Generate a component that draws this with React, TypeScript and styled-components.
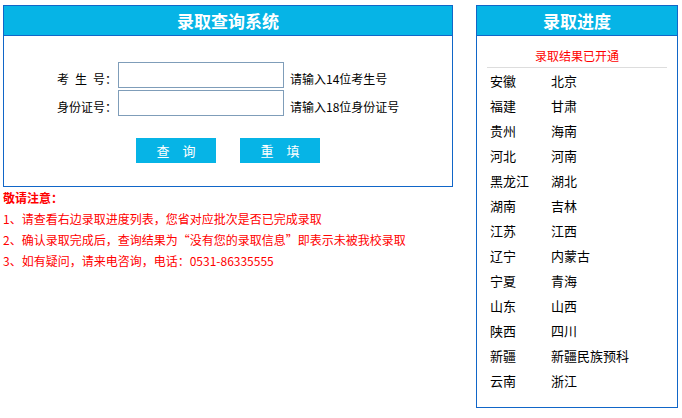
import styled, { createGlobalStyle } from "styled-components";

const GlobalStyle = createGlobalStyle`
  body {
    margin: 0;
    background: #fff;
    font-family: "Noto Sans CJK SC", "Liberation Sans", sans-serif;
    font-size: 12px;
    color: #000;
  }
`;

const Page = styled.div`
  display: flex;
  align-items: flex-start;
  gap: 23px;
  padding: 5px 0 0 3px;
`;

const LeftColumn = styled.div`
  width: 450px;
`;

const Panel = styled.div<{ $width: number }>`
  box-sizing: border-box;
  width: ${(p) => p.$width}px;
  border: 1px solid #1166c8;
  background: #fff;
`;

const PanelHeader = styled.div`
  height: 29px;
  line-height: 29px;
  background: #06b4e6;
  border-bottom: 1px solid #1166c8;
  color: #fff;
  font-size: 17px;
  font-weight: bold;
  text-align: center;
`;

const FormBody = styled.div`
  display: flex;
  flex-direction: column;
  padding: 26px 0 23px;
`;

const FieldRow = styled.div`
  display: flex;
  align-items: flex-end;
  margin-bottom: 2px;
`;

const Label = styled.label`
  width: 113px;
  padding-right: 1px;
  text-align: right;
  line-height: 18px;
`;

const Input = styled.input`
  box-sizing: border-box;
  width: 166px;
  height: 26px;
  margin: 0;
  padding: 2px 4px;
  border: 1px solid #7f9db9;
  font: inherit;
  outline: none;
`;

const Hint = styled.span`
  margin-left: 6px;
  line-height: 18px;
`;

const ButtonRow = styled.div`
  display: flex;
  justify-content: center;
  gap: 24px;
  margin-top: 20px;
`;

const Button = styled.button`
  width: 80px;
  height: 25px;
  margin: 0;
  padding: 0;
  border: none;
  background: #06b4e6;
  color: #fff;
  font-family: inherit;
  font-size: 13px;
  cursor: pointer;
`;

const Notice = styled.div`
  color: #ff0000;
  line-height: 21px;
`;

const NoticeTitle = styled.div`
  font-weight: bold;
`;

const NoticeLine = styled.div``;

const Subtitle = styled.div`
  margin: 10px 10px 0;
  line-height: 20px;
  padding-bottom: 1px;
  border-bottom: 1px solid #dddddd;
  color: #ff0000;
  text-align: center;
`;

const ProvinceList = styled.div`
  padding: 0 0 14px 13px;
`;

const ProvinceRow = styled.div`
  display: flex;
  height: 25px;
  align-items: center;
  font-size: 13px;
`;

const ProvinceCell = styled.span<{ $width?: number }>`
  width: ${(p) => (p.$width ? `${p.$width}px` : "auto")};
`;

const provinces: [string, string][] = [
  ["安徽", "北京"],
  ["福建", "甘肃"],
  ["贵州", "海南"],
  ["河北", "河南"],
  ["黑龙江", "湖北"],
  ["湖南", "吉林"],
  ["江苏", "江西"],
  ["辽宁", "内蒙古"],
  ["宁夏", "青海"],
  ["山东", "山西"],
  ["陕西", "四川"],
  ["新疆", "新疆民族预科"],
  ["云南", "浙江"],
];

export default function App() {
  return (
    <>
      <GlobalStyle />
      <Page>
        <LeftColumn>
          <Panel $width={450}>
            <PanelHeader>录取查询系统</PanelHeader>
            <FormBody>
              <FieldRow>
                <Label>考&ensp;生&ensp;号：</Label>
                <Input type="text" />
                <Hint>请输入14位考生号</Hint>
              </FieldRow>
              <FieldRow>
                <Label>身份证号：</Label>
                <Input type="text" />
                <Hint>请输入18位身份证号</Hint>
              </FieldRow>
              <ButtonRow>
                <Button>查{"\u3000"}询</Button>
                <Button>重{"\u3000"}填</Button>
              </ButtonRow>
            </FormBody>
          </Panel>
          <Notice>
            <NoticeTitle>敬请注意：</NoticeTitle>
            <NoticeLine>1、请查看右边录取进度列表，您省对应批次是否已完成录取</NoticeLine>
            <NoticeLine>2、确认录取完成后，查询结果为“没有您的录取信息”即表示未被我校录取</NoticeLine>
            <NoticeLine>3、如有疑问，请来电咨询，电话：0531-86335555</NoticeLine>
          </Notice>
        </LeftColumn>
        <Panel $width={202}>
          <PanelHeader>录取进度</PanelHeader>
          <Subtitle>录取结果已开通</Subtitle>
          <ProvinceList>
            {provinces.map(([a, b]) => (
              <ProvinceRow key={a}>
                <ProvinceCell $width={61}>{a}</ProvinceCell>
                <ProvinceCell>{b}</ProvinceCell>
              </ProvinceRow>
            ))}
          </ProvinceList>
        </Panel>
      </Page>
    </>
  );
}
